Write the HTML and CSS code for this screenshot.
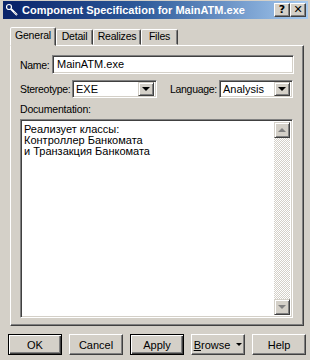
FILE: index.html
```html
<!DOCTYPE html>
<html lang="en">
<head>
    <meta charset="UTF-8">
    <title>Component Specification for MainATM.exe</title>
    <link rel="stylesheet" href="styles.css">
</head>
<body>

    <div class="window">
        <div class="titlebar">
            <svg class="app-icon" width="16" height="16" viewBox="0 0 16 16">
                <rect x="0" y="0" width="16" height="16" fill="#0a246a"/>
                <circle cx="5" cy="5" r="2.5" fill="none" stroke="#fff" stroke-width="1.2"/>
                <path d="M7 7 L13 13" stroke="#fff" stroke-width="2"/>
                <path d="M10 10 L13 13" stroke="#c0c0c0" stroke-width="1"/>
            </svg>
            <span class="title">Component Specification for MainATM.exe</span>
            <div class="caption-btns">
                <button class="cap-btn">?</button>
                <button class="cap-btn">&#x2715;</button>
            </div>
        </div>

        <div class="tabs">
            <div class="tab active tab-general">General</div>
            <div class="tab tab-detail">Detail</div>
            <div class="tab tab-realizes">Realizes</div>
            <div class="tab tab-files">Files</div>
        </div>

        <div class="panel">
            <div class="row">
                <label class="lbl lbl-name">Name:</label>
                <div class="field name-field">MainATM.exe</div>
            </div>

            <div class="row row-combo">
                <label class="lbl lbl-stereo">Stereotype:</label>
                <div class="field combo stereo">
                    <span class="combo-text">EXE</span>
                    <span class="drop-btn"><i class="tri"></i></span>
                </div>
                <label class="lbl lbl-lang">Language:</label>
                <div class="field combo lang">
                    <span class="combo-text">Analysis</span>
                    <span class="drop-btn"><i class="tri"></i></span>
                </div>
            </div>

            <div class="doc-label">Documentation:</div>
            <div class="field doc">
                <div class="doc-text">
                    Реализует классы:<br>
                    Контроллер Банкомата<br>
                    и Транзакция Банкомата
                </div>
                <div class="scrollbar">
                    <span class="sb-btn"><i class="tri up"></i></span>
                    <span class="sb-track"></span>
                    <span class="sb-btn"><i class="tri down"></i></span>
                </div>
            </div>
        </div>

        <div class="buttons">
            <button class="btn default">OK</button>
            <button class="btn">Cancel</button>
            <button class="btn default">Apply</button>
            <button class="btn browse"><span><u>B</u>rowse</span><i class="tri small"></i></button>
            <button class="btn">Help</button>
        </div>
    </div>

</body>
</html>
```

FILE: styles.css
```css
body {
    margin: 0;
    background: #d4d0c8;
    font-family: "Liberation Sans", Arial, sans-serif;
    font-size: 11px;
    color: #000;
}
.window {
    width: 310px;
    height: 360px;
    padding: 1px 2px 0 3px;
    box-sizing: border-box;
}
.titlebar {
    height: 18px;
    display: flex;
    align-items: center;
    background: linear-gradient(to right, #0a246a 0%, #2d5a9a 45%, #a6caf0 100%);
    padding: 0 2px 0 1px;
}
.app-icon {
    flex: none;
}
.title {
    color: #fff;
    font-weight: bold;
    font-size: 11px;
    margin-left: 2px;
    white-space: nowrap;
}
.caption-btns {
    margin-left: auto;
    display: flex;
}
.cap-btn {
    width: 16px;
    height: 14px;
    padding: 0;
    font-family: "DejaVu Sans", sans-serif;
    font-weight: bold;
    font-size: 11px;
    line-height: 12px;
    background: #d4d0c8;
    border: 1px solid;
    border-color: #fff #404040 #404040 #fff;
    box-shadow: inset -1px -1px #808080;
    color: #000;
}
.tabs {
    display: flex;
    align-items: flex-end;
    height: 18px;
    margin-top: 8px;
    padding-left: 7px;
}
.tab {
    height: 14px;
    line-height: 13px;
    font-size: 10.5px;
    text-align: center;
    letter-spacing: -0.2px;
    border: 1px solid;
    border-color: #fff #404040 transparent #fff;
    box-shadow: inset -1px 0 #808080;
    border-radius: 2px 2px 0 0;
}
.tab.active {
    height: 17px;
    line-height: 14px;
    position: relative;
    top: 1px;
    background: #d4d0c8;
    z-index: 1;
}
.tab-general {
    width: 44px;
}
.tab-detail {
    width: 35px;
}
.tab-realizes {
    width: 46px;
}
.tab-files {
    width: 35px;
}
.panel {
    width: 294px;
    height: 281px;
    margin-left: 7px;
    box-sizing: border-box;
    border: 1px solid;
    border-color: #fff #404040 #404040 #fff;
    box-shadow: inset -1px -1px #808080;
    padding: 9px 9px 0 9px;
}
.row {
    display: flex;
    align-items: center;
}
.lbl {
    font-size: 10.5px;
    letter-spacing: -0.3px;
    white-space: nowrap;
}
.field {
    background: #fff;
    box-sizing: border-box;
    border: 1px solid;
    border-color: #808080 #fff #fff #808080;
    box-shadow: inset 1px 1px #404040, inset -1px -1px #d4d0c8;
}
.lbl-name {
    width: 32px;
}
.name-field {
    width: 242px;
    height: 19px;
    padding: 2px 0 0 4px;
}
.row-combo {
    margin-top: 6px;
}
.lbl-stereo {
    width: 52px;
}
.combo {
    height: 18px;
    display: flex;
    align-items: center;
    padding: 2px;
}
.combo-text {
    flex: 1;
    padding-left: 1px;
}
.stereo {
    width: 85px;
}
.lang {
    width: 74px;
}
.lbl-lang {
    margin-left: 13px;
    width: 49px;
}
.drop-btn {
    width: 16px;
    height: 14px;
    box-sizing: border-box;
    background: #d4d0c8;
    border: 1px solid;
    border-color: #d4d0c8 #404040 #404040 #d4d0c8;
    box-shadow: inset 1px 1px #fff, inset -1px -1px #808080;
    display: flex;
    align-items: center;
    justify-content: center;
}
.tri {
    width: 0;
    height: 0;
    border-left: 4px solid transparent;
    border-right: 4px solid transparent;
    border-top: 4px solid #000;
}
.doc-label {
    margin-top: 5px;
    height: 16px;
    font-size: 10.5px;
    letter-spacing: -0.2px;
}
.doc {
    width: 273px;
    height: 199px;
    display: flex;
    padding: 2px;
}
.doc-text {
    flex: 1;
    padding: 2px 0 0 1px;
    line-height: 11px;
}
.scrollbar {
    width: 16px;
    display: flex;
    flex-direction: column;
}
.sb-track {
    flex: 1;
    background: repeating-conic-gradient(#d4d0c8 0 25%, #fff 0 50%) 0 0 / 2px 2px;
}
.sb-btn {
    height: 16px;
    box-sizing: border-box;
    background: #d4d0c8;
    border: 1px solid;
    border-color: #d4d0c8 #404040 #404040 #d4d0c8;
    box-shadow: inset 1px 1px #fff, inset -1px -1px #808080;
    display: flex;
    align-items: center;
    justify-content: center;
}
.tri.up {
    border-top: none;
    border-bottom: 4px solid #808080;
}
.tri.down {
    border-top-color: #808080;
}
.buttons {
    display: flex;
    gap: 7px;
    margin-top: 8px;
    padding-left: 5px;
}
.btn {
    width: 54px;
    height: 21px;
    padding: 0;
    font-family: "Liberation Sans", Arial, sans-serif;
    font-size: 11px;
    color: #000;
    background: #d4d0c8;
    border: 1px solid;
    border-color: #fff #404040 #404040 #fff;
    box-shadow: inset -1px -1px #808080;
}
.btn.default {
    border: 1px solid #000;
    box-shadow: inset 1px 1px #fff, inset -1px -1px #404040, inset -2px -2px #808080;
}
.browse {
    display: flex;
    align-items: center;
    justify-content: center;
    gap: 6px;
}
.tri.small {
    border-left-width: 3px;
    border-right-width: 3px;
    border-top-width: 3px;
}
```
